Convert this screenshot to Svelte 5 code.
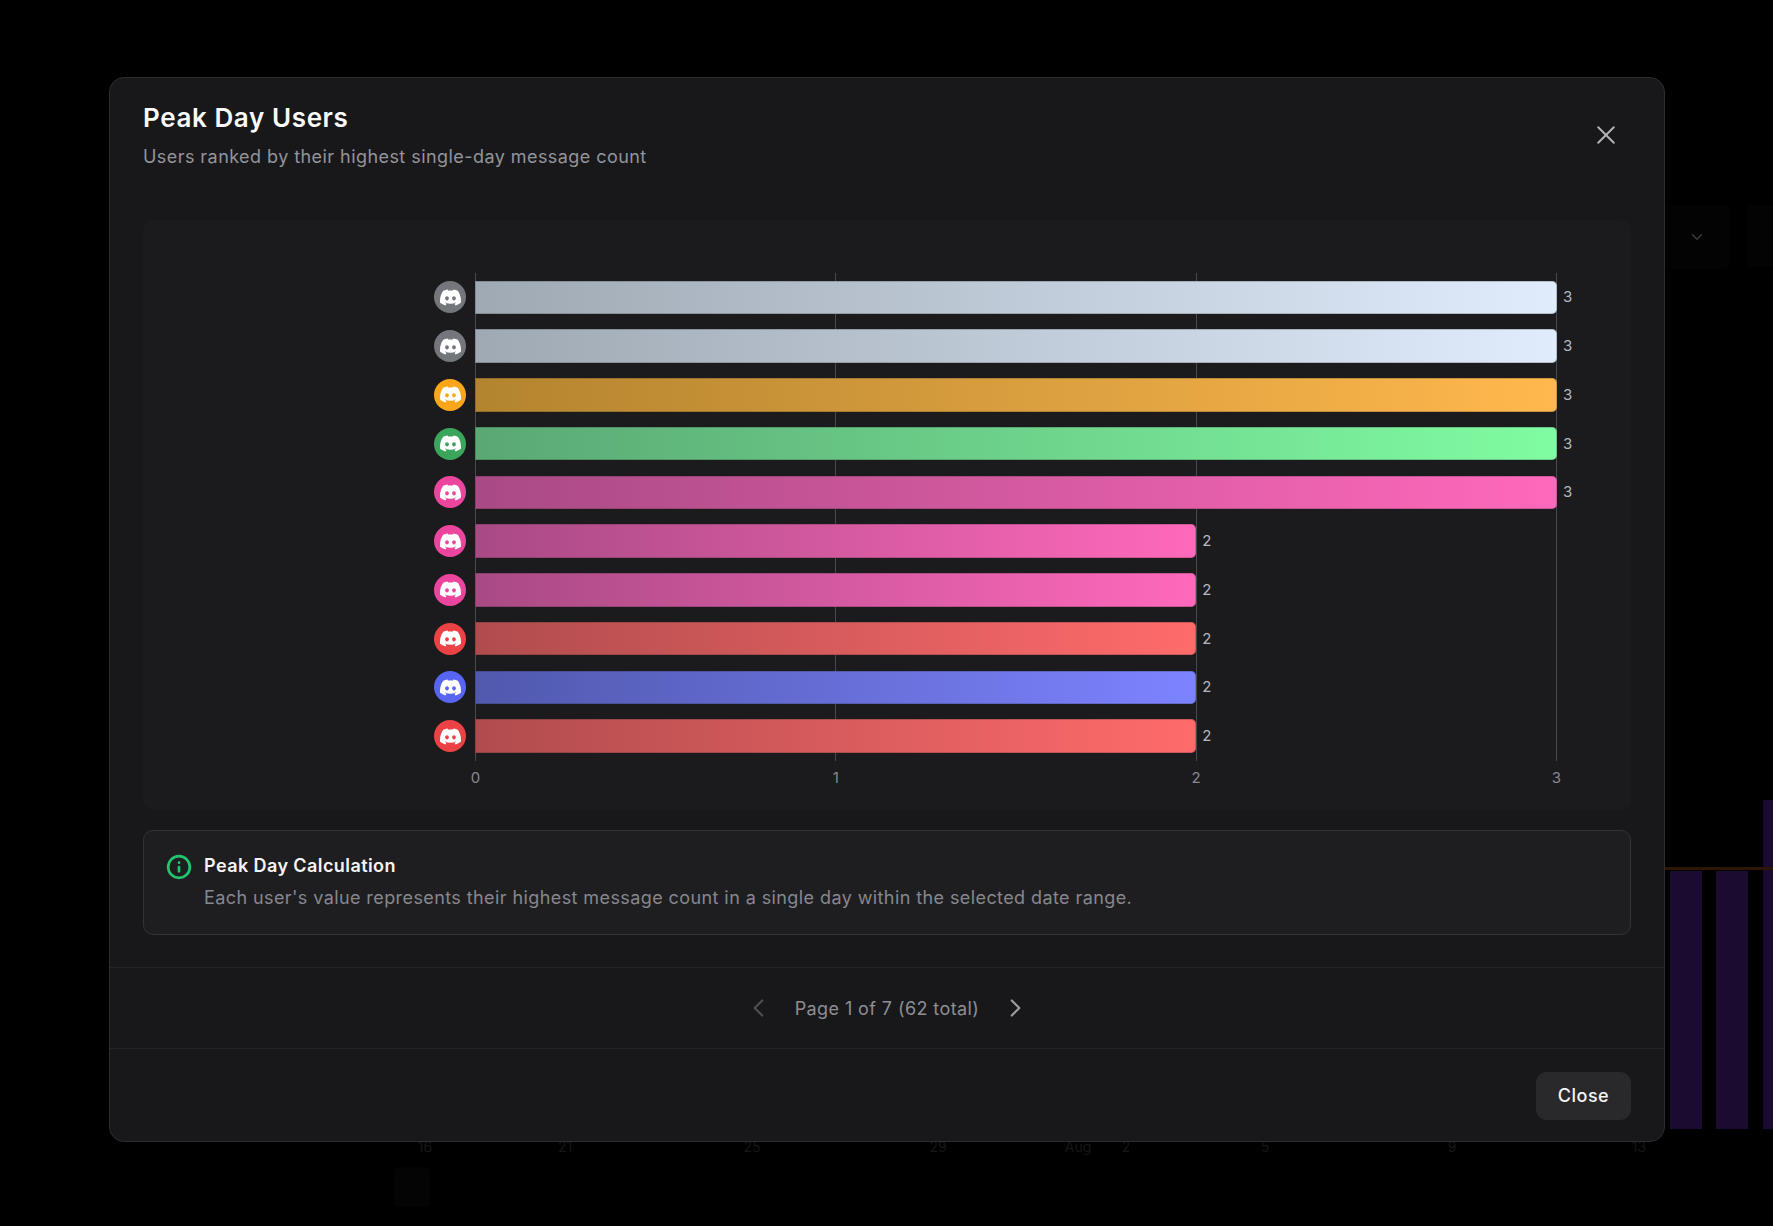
<script>
  const discord = "M13.545 2.907a13.2 13.2 0 0 0-3.257-1.011.05.05 0 0 0-.052.025c-.141.25-.297.577-.406.833a12.2 12.2 0 0 0-3.658 0 8 8 0 0 0-.412-.833.05.05 0 0 0-.052-.025c-1.125.194-2.22.534-3.257 1.011a.04.04 0 0 0-.021.018C.356 6.024-.213 9.047.066 12.032q.003.022.021.037a13.3 13.3 0 0 0 3.995 2.02.05.05 0 0 0 .056-.019q.463-.63.818-1.329a.05.05 0 0 0-.01-.059l-.018-.011a9 9 0 0 1-1.248-.595.05.05 0 0 1-.02-.066l.015-.019q.127-.095.248-.195a.05.05 0 0 1 .051-.007c2.619 1.196 5.454 1.196 8.041 0a.05.05 0 0 1 .053.007q.121.1.248.195a.05.05 0 0 1-.004.085 8 8 0 0 1-1.249.594.05.05 0 0 0-.03.03.05.05 0 0 0 .003.041c.24.465.515.909.817 1.329a.05.05 0 0 0 .056.019 13.2 13.2 0 0 0 4.001-2.02.05.05 0 0 0 .021-.037c.334-3.451-.559-6.449-2.366-9.106a.03.03 0 0 0-.02-.019m-8.198 7.307c-.789 0-1.438-.724-1.438-1.612s.637-1.613 1.438-1.613c.807 0 1.45.73 1.438 1.613 0 .888-.637 1.612-1.438 1.612m5.316 0c-.788 0-1.438-.724-1.438-1.612s.637-1.613 1.438-1.613c.807 0 1.451.73 1.438 1.613 0 .888-.631 1.612-1.438 1.612";

  const tones = {
    grey: { avatar: "#73767b", from: "#9fa9b3", to: "#e0ebfc" },
    orange: { avatar: "#faa61a", from: "#b3842f", to: "#ffb84d" },
    green: { avatar: "#3ba55c", from: "#5aa874", to: "#80fca2" },
    pink: { avatar: "#eb459e", from: "#a94a84", to: "#ff69bb" },
    red: { avatar: "#ed4245", from: "#b04c4e", to: "#ff6b6b" },
    blue: { avatar: "#5865f2", from: "#5059ad", to: "#7c83ff" }
  };
  const rows = [
    ["grey", 3], ["grey", 3], ["orange", 3], ["green", 3], ["pink", 3],
    ["pink", 2], ["pink", 2], ["red", 2], ["blue", 2], ["red", 2]
  ].map(([t, value]) => ({ ...tones[t], value }));
  const max = 3;
  const ticks = [0, 1, 2, 3];

  const behindTicks = [["16", 425], ["21", 565], ["25", 752], ["29", 938], ["Aug", 1078], ["2", 1126], ["5", 1265], ["9", 1452], ["13", 1639]];
  const behindBars = [[1670, 871, 32, 258], [1716, 871, 32, 258], [1763, 800, 10, 329]];
</script>

<div class="page">
  <div class="behind" aria-hidden="true">
    <div class="select">
      <svg width="18" height="18" viewBox="0 0 24 24" fill="none" stroke="#3a3a3a" stroke-width="2" stroke-linecap="round" stroke-linejoin="round"><path d="m6 9 6 6 6-6" /></svg>
    </div>
    <div class="select-next"></div>
    {#each behindBars as [x, y, w, h]}
      <div class="bg-bar" style="left:{x}px;top:{y}px;width:{w}px;height:{h}px"></div>
    {/each}
    <div class="bg-line"></div>
    {#each behindTicks as [label, x]}
      <span class="bg-tick" style="left:{x}px">{label}</span>
    {/each}
    <div class="bg-blob"></div>
  </div>

  <div class="overlay">
    <section class="modal">
      <header class="head">
        <div>
          <h2>Peak Day Users</h2>
          <p>Users ranked by their highest single-day message count</p>
        </div>
        <button class="x" aria-label="Close dialog">
          <svg width="22" height="22" viewBox="0 0 24 24" fill="none" stroke="currentColor" stroke-width="2.1" stroke-linecap="round"><path d="M3.5 3.5l17 17M20.5 3.5l-17 17" /></svg>
        </button>
      </header>

      <div class="body">
        <div class="panel">
          <div class="plot">
            <div class="grid">
              {#each ticks as t (t)}<i></i>{/each}
            </div>
            {#each rows as r}
              <div class="row">
                <span class="avatar" style="background:{r.avatar}">
                  <svg width="21" height="21" viewBox="0 0 16 16" fill="#fff"><path d={discord} /></svg>
                </span>
                <div class="track">
                  <div class="bar" style="width:{(r.value / max) * 100}%;background:linear-gradient(90deg,{r.from},{r.to})"></div>
                  <span class="val">{r.value}</span>
                </div>
              </div>
            {/each}
          </div>
          <div class="axis">
            {#each ticks as t (t)}<span>{t}</span>{/each}
          </div>
        </div>

        <div class="info">
          <svg class="info-icon" width="26" height="26" viewBox="0 0 24 24" fill="none" stroke="#22c56e" stroke-width="2.5" stroke-linecap="round" stroke-linejoin="round"><circle cx="12" cy="12" r="10" /><path d="M12 16v-4M12 8h.01" /></svg>
          <div>
            <h3>Peak Day Calculation</h3>
            <p>Each user's value represents their highest message count in a single day within the selected date range.</p>
          </div>
        </div>
      </div>

      <nav class="pager">
        <svg class="dim" width="26" height="26" viewBox="0 0 24 24" fill="none" stroke="currentColor" stroke-width="2" stroke-linecap="round" stroke-linejoin="round"><path d="m15 5-7 7 7 7" /></svg>
        <span>Page 1 of 7 (62 total)</span>
        <svg class="lit" width="26" height="26" viewBox="0 0 24 24" fill="none" stroke="currentColor" stroke-width="2" stroke-linecap="round" stroke-linejoin="round"><path d="m9 5 7 7-7 7" /></svg>
      </nav>

      <footer class="foot">
        <button class="close">Close</button>
      </footer>
    </section>
  </div>
</div>

<style>
  :global(body) {
    margin: 0;
    background: #000;
  }
  .page {
    position: relative;
    width: 1773px;
    height: 1226px;
    overflow: hidden;
    background: #000;
    font-family: Inter, "Liberation Sans", sans-serif;
  }
  .behind {
    position: absolute;
    inset: 0;
  }
  .select {
    position: absolute;
    left: 1640px;
    top: 205px;
    width: 90px;
    height: 64px;
    display: flex;
    align-items: center;
    justify-content: flex-end;
    padding-right: 24px;
    box-sizing: border-box;
    background: #030303;
    border-radius: 6px;
  }
  .select-next {
    position: absolute;
    left: 1747px;
    top: 205px;
    width: 40px;
    height: 62px;
    background: #030303;
    border-radius: 6px;
  }
  .bg-bar {
    position: absolute;
    background: #1b0b30;
  }
  .bg-line {
    position: absolute;
    left: 1660px;
    top: 867px;
    width: 113px;
    height: 3px;
    background: #2c1505;
  }
  .bg-tick {
    position: absolute;
    top: 1138px;
    transform: translateX(-50%);
    font-size: 14px;
    color: #161616;
  }
  .bg-blob {
    position: absolute;
    left: 394px;
    top: 1167px;
    width: 36px;
    height: 40px;
    background: #040404;
    border-radius: 4px;
  }
  .overlay {
    position: absolute;
    inset: 0;
    padding: 77px 108px 0 109px;
  }
  .modal {
    box-sizing: border-box;
    height: 1065px;
    display: flex;
    flex-direction: column;
    background: #18181b;
    border: 1px solid #2d2d31;
    border-radius: 15px;
  }
  .head {
    display: flex;
    justify-content: space-between;
    height: 142px;
    flex: none;
    padding: 24px 47px 0 33px;
    box-sizing: border-box;
  }
  h2 {
    margin: 0;
    font-size: 26px;
    line-height: 32px;
    font-weight: 600;
    letter-spacing: 0.6px;
    color: #fafafa;
  }
  .head p {
    margin: 9px 0 0;
    font-size: 18px;
    line-height: 28px;
    letter-spacing: 0.44px;
    color: #94949a;
  }
  .x {
    width: 22px;
    height: 22px;
    padding: 0;
    margin: 22px 0 0;
    background: none;
    border: 0;
    color: #b4b4b8;
  }
  .body {
    flex: 1;
    padding: 0 33px;
  }
  .panel {
    height: 590px;
    box-sizing: border-box;
    padding: 53px 74px 0 291px;
    background: #1b1b1e;
    border-radius: 10px;
  }
  .plot {
    position: relative;
  }
  .grid {
    position: absolute;
    top: 0;
    bottom: 0;
    left: 41px;
    right: 0;
    display: flex;
    justify-content: space-between;
  }
  .grid i {
    width: 1px;
    background: #49494d;
  }
  .row {
    position: relative;
    height: 48.75px;
    display: flex;
    align-items: center;
    gap: 9px;
  }
  .avatar {
    flex: none;
    width: 32px;
    height: 32px;
    border-radius: 50%;
    display: flex;
    align-items: center;
    justify-content: center;
  }
  .track {
    flex: 1;
    min-width: 0;
    display: flex;
    align-items: center;
  }
  .bar {
    flex: none;
    height: 33.5px;
    box-sizing: border-box;
    border-radius: 0 5px 5px 0;
    box-shadow: inset 0 0 0 1px rgba(30, 30, 33, 0.22);
  }
  .val {
    flex: none;
    width: 0;
    margin-left: 6px;
    font-size: 15px;
    line-height: 18px;
    color: #b8b8bc;
  }
  .axis {
    margin: 8px 0 0 41px;
    display: flex;
    justify-content: space-between;
    font-size: 15px;
    line-height: 18px;
    color: #88888e;
  }
  .axis span {
    width: 1px;
    display: flex;
    justify-content: center;
  }
  .info {
    box-sizing: border-box;
    height: 105px;
    margin-top: 20px;
    display: flex;
    gap: 12px;
    padding: 21px 0 0 22px;
    background: #1e1e21;
    border: 1px solid #333337;
    border-radius: 10px;
  }
  .info-icon {
    margin-top: 2px;
    flex: none;
  }
  h3 {
    margin: 0;
    font-size: 18px;
    line-height: 28px;
    font-weight: 600;
    letter-spacing: 0.42px;
    color: #f4f4f5;
  }
  .info p {
    margin: 4px 0 0;
    font-size: 18px;
    line-height: 28px;
    letter-spacing: 0.41px;
    color: #87878d;
  }
  .pager {
    flex: none;
    height: 82px;
    border-top: 1px solid #242428;
    border-bottom: 1px solid #242428;
    box-sizing: border-box;
    display: flex;
    align-items: center;
    justify-content: center;
    gap: 22.5px;
    font-size: 18px;
    letter-spacing: 0.41px;
    color: #8e8e94;
  }
  .dim {
    color: #4e4e54;
  }
  .lit {
    color: #9c9ca2;
  }
  .foot {
    flex: none;
    height: 92px;
    box-sizing: border-box;
    padding: 23px 33px 0;
    display: flex;
    justify-content: flex-end;
    align-items: flex-start;
  }
  .close {
    width: 95px;
    height: 48px;
    padding: 0 0 2px;
    border: 0;
    border-radius: 11px;
    background: #29292c;
    color: #f4f4f5;
    font: 500 18px Inter, "Liberation Sans", sans-serif;
    letter-spacing: 0.5px;
  }
</style>
